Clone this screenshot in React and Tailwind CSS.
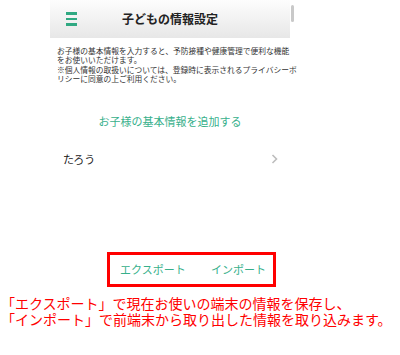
import React from "react";

const jp = { fontFamily: '"Noto Sans CJK JP", "Noto Sans", sans-serif' };

function Hamburger() {
  return (
    <div className="flex flex-col gap-[3px] w-[11px]">
      <div className="h-[2.5px] bg-[#30a982]" />
      <div className="h-[2.5px] bg-[#30a982]" />
      <div className="h-[2.5px] bg-[#30a982]" />
    </div>
  );
}

function Chevron() {
  return (
    <svg width="7" height="10" viewBox="0 0 7 10" fill="none">
      <path d="M1.5 1 L5.5 5 L1.5 9" stroke="#bdbdbd" strokeWidth="1.6" />
    </svg>
  );
}

export default function App() {
  return (
    <div className="relative w-[400px] h-[355px] bg-white overflow-hidden" style={jp}>
      <div className="ml-[50px] w-[240px] h-[252px]">
        <div className="grid grid-cols-[40px_1fr_40px] items-center h-[38px] bg-linear-to-b from-[#fdfdfd] to-[#e7e7e7]">
          <div className="pl-4">
            <Hamburger />
          </div>
          <div className="text-center text-[12px] font-bold text-[#222] leading-none">
            子どもの情報設定
          </div>
          <div />
        </div>

        <div className="pt-[8px] pl-[7px] text-[7.75px] leading-[9.4px] text-[#333] whitespace-nowrap">
          <div>お子様の基本情報を入力すると、予防接種や健康管理で便利な機能</div>
          <div>をお使いいただけます。</div>
          <div>※個人情報の取扱いについては、登録時に表示されるプライバシーポ</div>
          <div>リシーに同意の上ご利用ください。</div>
        </div>

        <div className="mt-[30px] text-center text-[11px] leading-[14px] text-[#37b08b]">
          お子様の基本情報を追加する
        </div>

        <div className="mt-[24px] flex items-center justify-between pl-[13px] pr-[12px] h-[14px]">
          <span className="text-[11px] leading-[14px] text-[#222]">たろう</span>
          <Chevron />
        </div>
      </div>

      <div className="absolute left-[291px] top-[5px] w-[3px] h-[17px] bg-[#c9c9c9] rounded-sm" />

      <div className="ml-[107px] w-[169px] h-[35px] border-[3px] border-[#ff0000] flex items-center justify-between pl-[10px] pr-[7px] text-[11px] text-[#37b08b]">
        <span>エクスポート</span>
        <span>インポート</span>
      </div>

      <div className="mt-[8px] pl-[1px] text-[14px] leading-[16px] text-[#ff0000] whitespace-nowrap">
        <div>「エクスポート」で現在お使いの端末の情報を保存し、</div>
        <div>「インポート」で前端末から取り出した情報を取り込みます。</div>
      </div>
    </div>
  );
}
